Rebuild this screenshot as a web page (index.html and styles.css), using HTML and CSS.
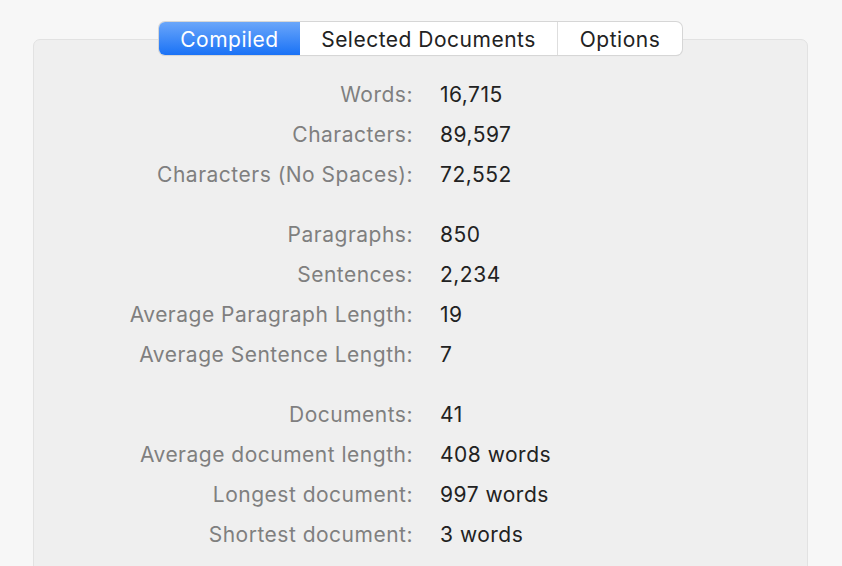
FILE: index.html
```html
<!DOCTYPE html>
<html>
  <head>
    <title>Statistics</title>
    <link rel="stylesheet" href="styles.css">
  </head>
  <body>
    <main class="panel">
      <nav class="tabs">
        <span class="tab active">Compiled</span>
        <span class="tab">Selected Documents</span>
        <span class="tab">Options</span>
      </nav>

      <dl class="stats">
        <dt>Words:</dt><dd>16,715</dd>
        <dt>Characters:</dt><dd>89,597</dd>
        <dt>Characters (No Spaces):</dt><dd>72,552</dd>
      </dl>

      <dl class="stats">
        <dt>Paragraphs:</dt><dd>850</dd>
        <dt>Sentences:</dt><dd>2,234</dd>
        <dt>Average Paragraph Length:</dt><dd>19</dd>
        <dt>Average Sentence Length:</dt><dd>7</dd>
      </dl>

      <dl class="stats">
        <dt>Documents:</dt><dd>41</dd>
        <dt>Average document length:</dt><dd>408 words</dd>
        <dt>Longest document:</dt><dd>997 words</dd>
        <dt>Shortest document:</dt><dd>3 words</dd>
      </dl>
    </main>
  </body>
</html>
```

FILE: styles.css
```css
/* reset */
* {
  box-sizing: border-box;
  margin: 0;
  padding: 0;
}

html,
body {
  height: 100%;
  overflow: hidden;
}

body {
  background-color: #f7f7f7;
  font-family: Inter, "Liberation Sans", sans-serif;
  font-size: 21px;
  letter-spacing: 0.5px;
  padding: 39px 34px 0 33px;
}

/* main panel */
.panel {
  height: 600px;
  background-color: #efefef;
  border: 1px solid #e2e2e2;
  border-radius: 7px;
  display: flex;
  flex-direction: column;
}

/* segmented control */
.tabs {
  align-self: center;
  display: flex;
  height: 33px;
  margin-top: -18px;
  background-color: #fff;
  border-radius: 6px;
  box-shadow: 0 0 0 1px #d6d6d6, 0 1px 1px rgba(0, 0, 0, 0.1);
}

.tab {
  display: flex;
  align-items: center;
  justify-content: center;
  color: #222;
  line-height: 1;
  padding-top: 2px;
}

.tab:nth-child(1) {
  width: 141px;
}

.tab:nth-child(2) {
  width: 258px;
  border-right: 1px solid #dedede;
}

.tab:nth-child(3) {
  width: 124px;
}

.tab.active {
  color: #fff;
  border-radius: 6px 0 0 6px;
  background: linear-gradient(#6aa6fa, #1a72f6);
}

/* statistics rows */
.stats {
  display: grid;
  grid-template-columns: 379px auto;
  column-gap: 27px;
  grid-auto-rows: 40px;
  align-items: center;
}

.stats:first-of-type {
  margin-top: 19px;
}

.stats + .stats {
  margin-top: 20px;
}

.stats dt {
  text-align: right;
  color: #7f7f7f;
}

.stats dd {
  color: #222;
}
```
